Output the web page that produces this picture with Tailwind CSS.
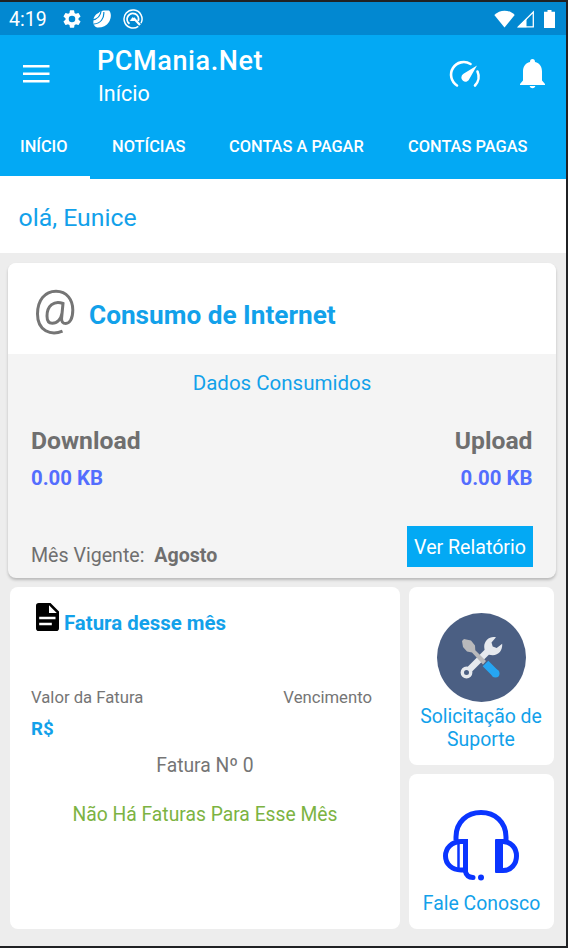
<!DOCTYPE html>
<html lang="pt-BR">
<head>
    <meta charset="UTF-8">
    <meta name="viewport" content="width=device-width, initial-scale=1.0">
    <title>PCMania.Net</title>
    <script src="https://cdn.jsdelivr.net/npm/@tailwindcss/browser@4"></script>
</head>
<body class="bg-[#202124] font-['Roboto',sans-serif]">

    <div class="w-[568px] h-[948px] pt-[2px] pr-[2px] pb-[2px] overflow-hidden whitespace-nowrap">
        <div class="h-full bg-[#ededed] flex flex-col">

            <!-- Status bar -->
            <div class="h-[33px] shrink-0 bg-[#0288d1] flex items-center justify-between pl-[9px] pr-[11px] text-white">
                <div class="flex items-center">
                    <span class="w-[53px] text-[19.5px] leading-[33px] pt-[2px]">4:19</span>
                    <svg class="w-[20px] h-[20px]" viewBox="1 1 22 22" fill="currentColor"><path d="M19.14 12.94c.04-.3.06-.61.06-.94s-.02-.64-.07-.94l2.03-1.58a.49.49 0 0 0 .12-.61l-1.92-3.32a.49.49 0 0 0-.59-.22l-2.39.96a7 7 0 0 0-1.62-.94l-.36-2.54a.48.48 0 0 0-.48-.41h-3.84a.47.47 0 0 0-.47.41l-.36 2.54c-.59.24-1.13.57-1.62.94l-2.39-.96a.48.48 0 0 0-.59.22L2.74 8.87a.47.47 0 0 0 .12.61l2.03 1.58a6 6 0 0 0 0 1.88l-2.03 1.58a.49.49 0 0 0-.12.61l1.92 3.32c.12.22.37.29.59.22l2.39-.96c.5.38 1.03.7 1.62.94l.36 2.54c.05.24.24.41.48.41h3.84c.24 0 .44-.17.47-.41l.36-2.54a7 7 0 0 0 1.62-.94l2.39.96c.22.08.47 0 .59-.22l1.92-3.32a.47.47 0 0 0-.12-.61zM12 15.6a3.6 3.6 0 1 1 0-7.2 3.6 3.6 0 0 1 0 7.2"/></svg>
                    <svg class="w-[20px] h-[20px] ml-[10px]" viewBox="0 0 20 20"><path d="M1.500 11C1.500 8 4 5 6.500 4 8.500 1.500 12 1.200 17 1.500 19.500 4 19.500 9 17 13 14.500 17 10 18.800 5 18.500 2 17.500.8 14.500 1.500 11Z" fill="#fff"/><path d="M0 11C5 10.500 8.500 7.500 9.300 1M2 15C8.500 14.500 12.300 9.500 11.800 3" fill="none" stroke="#0288d1" stroke-width="1.200"/></svg>
                    <svg class="w-[20px] h-[20px] ml-[11px]" viewBox="0 0 20 20" fill="none" stroke="#fff"><path d="M15.300 17.300A9 9 0 1 1 18 14.200" stroke-width="1.500"/><path d="M6.500 14.700A5.700 5.700 0 1 1 15.200 12" stroke-width="1.900"/><path d="m10.500 9 6.500 7" stroke-width="2.300"/><path d="M7 12 9.500 8.500l3 2-1 1.500" fill="#fff" stroke-width=".5"/></svg>
                </div>
                <div class="flex items-center">
                    <svg class="w-[21px] h-[18px]" viewBox="0 0 21 18" fill="#fff"><path d="M.3 5C6-.8 15-.8 20.700 5L10.500 17.500Z"/></svg>
                    <svg class="w-[18px] h-[18px] ml-[2px]" viewBox="0 0 18 18"><path d="M1.500 16.800 16.300 2V16.800Z" fill="none" stroke="#fff" stroke-width="1.300"/><path d="M.5 17.300 9.500 8.500V17.300Z" fill="#fff"/></svg>
                    <svg class="w-[11px] h-[18px] ml-[9px]" viewBox="0 0 11 18" fill="#fff"><path d="M3.500 0h4v1.700H11V18H0V1.700h3.500z"/></svg>
                </div>
            </div>

            <!-- App bar -->
            <header class="h-[144px] shrink-0 bg-[#03a9f4] text-white flex flex-col">
                <div class="h-[79px] flex items-center pl-[23px] pr-[21px]">
                    <svg class="w-[27px] h-[20px]" viewBox="0 0 27 20" fill="#fff"><path d="M0 0h26.500v2.400H0zM0 7.500h26.500v2.400H0zM0 15h26.500v2.400H0z"/></svg>
                    <div class="flex-1 ml-[47px] h-full">
                        <h1 class="h-[34px] pt-[9px] text-[27px] leading-[34px] font-medium tracking-[0.6px]">PCMania.Net</h1>
                        <p class="pt-[9px] pl-[1px] text-[21.5px] leading-[32px]">Início</p>
                    </div>
                    <svg class="w-[28px] h-[28px] overflow-visible" viewBox="0 0 28 28" fill="none" stroke="#fff" stroke-width="2.600" stroke-linecap="round"><path d="M5 24.500A12.600 12.600 0 0 1 18.500 3M25.500 10.500A12.600 12.600 0 0 1 23 24.500"/><path d="M25 4.500 17.600 17.500A4.200 4.200 0 1 1 11.500 12.800Z" fill="#fff" stroke="none"/></svg>
                    <svg class="w-[25px] h-[31px] ml-[40px]" viewBox="0 0 25 31" fill="#fff"><path d="M12.500 0c1.600 0 2.500 1.200 2.500 2.900 4.800 1.200 7 5 7 9.600v9l3 3.500V26H0v-1l3-3.500v-9c0-4.600 2.200-8.400 7-9.600C10 1.200 10.900 0 12.500 0M9.700 27h5.600c-.2 1.400-1.300 2.200-2.800 2.200s-2.600-.8-2.800-2.200"/></svg>
                </div>
                <nav class="h-[65px] flex text-[16.4px] leading-[66px] font-medium">
                    <a class="w-[90px] pl-[20px] border-b-[3px] border-white">INÍCIO</a>
                    <a class="w-[117px] pl-[22px]">NOTÍCIAS</a>
                    <a class="w-[179px] pl-[22px]">CONTAS A PAGAR</a>
                    <a class="pl-[22px]">CONTAS PAGAS</a>
                </nav>
            </header>

            <div class="h-[74px] shrink-0 bg-white pl-[18.5px] text-[24.8px] leading-[78px] text-[#12a1ea]">olá, Eunice</div>

            <!-- Internet usage -->
            <section class="h-[315px] shrink-0 mt-[10px] ml-[8px] mr-[10px] rounded-[8px] bg-[#f4f4f4] shadow-[0_2px_3px_rgba(0,0,0,0.22)] overflow-hidden text-[#6f6f6f]">
                <div class="h-[91px] bg-white flex pl-[26px]">
                    <svg class="w-[42px] h-[48px] mt-[25px]" viewBox="0 0 42 48" fill="none" stroke="#757575" stroke-width="3"><path d="M28.500 43.200C17 48 3.500 43 3.500 26 3.500 12 11 3.300 22 3.300S38.800 12 38.800 22c0 9-3.300 13.500-7 13.500-3 0-4.500-2-4.200-5.500L29 15.500c-9-3.500-16 2.500-16 12.500 0 4.500 2 7.300 5.300 7.300 5 0 8.700-4.300 9.500-9.300"/></svg>
                    <h2 class="ml-[13px] text-[26.2px] leading-[104px] font-bold text-[#12a1ea]">Consumo de Internet</h2>
                </div>
                <p class="text-center text-[20.5px] leading-[57px] pt-[1px] text-[#12a1ea]">Dados Consumidos</p>
                <div class="flex justify-between pl-[23px] pr-[23.5px] pt-[10px] font-bold">
                    <div>
                        <p class="text-[24.7px] leading-[38px]">Download</p>
                        <p class="text-[20.4px] leading-[36px] text-[#536dfe]">0.00 KB</p>
                    </div>
                    <div class="text-right">
                        <p class="text-[24.7px] leading-[38px]">Upload</p>
                        <p class="text-[20.4px] leading-[36px] text-[#536dfe]">0.00 KB</p>
                    </div>
                </div>
                <div class="flex justify-between items-start pl-[23px] pr-[23px] pt-[30px]">
                    <p class="pt-[17px] text-[19.6px] leading-[26px]">Mês Vigente: <span class="ml-[5px] font-bold">Agosto</span></p>
                    <button class="w-[126px] h-[41px] bg-[#03a9f4] text-white text-[19.6px] leading-[43px]">Ver Relatório</button>
                </div>
            </section>

            <div class="flex gap-[9px] mt-[9px] ml-[10px]">
                <!-- Bill of the month -->
                <section class="w-[390px] h-[342px] rounded-[8px] bg-white text-[#757575]">
                    <div class="flex pl-[26px] pt-[16px]">
                        <svg class="w-[23px] h-[28px]" viewBox="0 0 23 28"><path d="M2.800 0H14.500L23 8.500V25.200A2.800 2.800 0 0 1 20.200 28H2.800A2.800 2.800 0 0 1 0 25.200V2.800A2.800 2.800 0 0 1 2.800 0" fill="#000"/><path d="M13 2.200V10h7.800zM3.200 13.800H19.500v2.500H3.200zM3.200 19.800H15.800v2.500H3.200z" fill="#fff"/></svg>
                        <h2 class="ml-[5px] text-[20.4px] leading-[40px] font-bold text-[#12a1ea]">Fatura desse mês</h2>
                    </div>
                    <div class="flex justify-between pl-[21px] pr-[28px] pt-[43px] text-[16.7px] leading-[24px]">
                        <span>Valor da Fatura</span>
                        <span>Vencimento</span>
                    </div>
                    <p class="pl-[21px] pt-[7px] text-[18.7px] leading-[24px] font-bold text-[#12a1ea]">R$</p>
                    <p class="text-center pt-[13px] text-[19.3px] leading-[24px]">Fatura Nº 0</p>
                    <p class="text-center pt-[25px] text-[19.3px] leading-[24px] text-[#7cb342]">Não Há Faturas Para Esse Mês</p>
                </section>

                <div class="flex flex-col gap-[9px] text-[19.4px] leading-[22.500px] text-center text-[#12a1ea]">
                    <a class="w-[145px] h-[178px] rounded-[8px] bg-white flex flex-col items-center pt-[26px]">
                        <svg class="w-[89px] h-[89px] shrink-0" viewBox="0 0 89 89">
                            <circle cx="44.500" cy="44.500" r="44.500" fill="#4b5f83"/>
                            <path d="M32.500 56.500 54 35" stroke="#e6e9ee" stroke-width="6.500"/>
                            <circle cx="29.500" cy="59.500" r="4.200" fill="none" stroke="#e6e9ee" stroke-width="3.400"/>
                            <path d="M59 24.300c-6-1.500-11.800 3-11.800 9.500 0 5 3.500 8.500 8.500 8.500 6 0 10-5 9.500-11.500l-5.500 4.200-4-1.500-1.200-4z" fill="#e6e9ee"/>
                            <path d="M25 28 27 26 34 27.500 38 32.500 38.300 37.300 49 48 46 51.500 35 39.500 30 38.500 26 34z" fill="#b9b9bb"/>
                            <path d="M48.500 50.500 58.500 60.500" stroke="#26a6f2" stroke-width="8"/>
                            <circle cx="58.500" cy="60.500" r="4" fill="#26a6f2"/>
                        </svg>
                        <span class="mt-[4px] mr-[1px]">Solicitação de<br>Suporte</span>
                    </a>
                    <a class="w-[145px] h-[155px] rounded-[8px] bg-white flex flex-col items-center pt-[36px]">
                        <svg class="w-[78px] h-[71px] shrink-0" viewBox="0 0 78 71" fill="none" stroke="#0a35ff" stroke-width="5">
                            <path d="M13 30V27C13 12 24 2.500 38 2.500S63 12 63 27V30"/>
                            <path d="M22.500 31.500H18C9 31.500 2.500 38 2.500 46S9 60 18 60H22.500Z"/>
                            <path d="M15.500 31V60" stroke-width="2.500"/>
                            <path d="M55 31.500H60C68 31.500 73.500 38 73.500 46S68 60.500 60 60.500H55Z"/>
                            <path d="M56 29.500V62.500" stroke-width="8"/>
                            <path d="M22 60C23 65 25 67.500 30 67.500" stroke-linecap="round"/>
                            <circle cx="38" cy="67.500" r="3" fill="#0a35ff" stroke="none"/>
                        </svg>
                        <span class="mt-[12px]">Fale Conosco</span>
                    </a>
                </div>
            </div>
        </div>
    </div>

</body>
</html>
